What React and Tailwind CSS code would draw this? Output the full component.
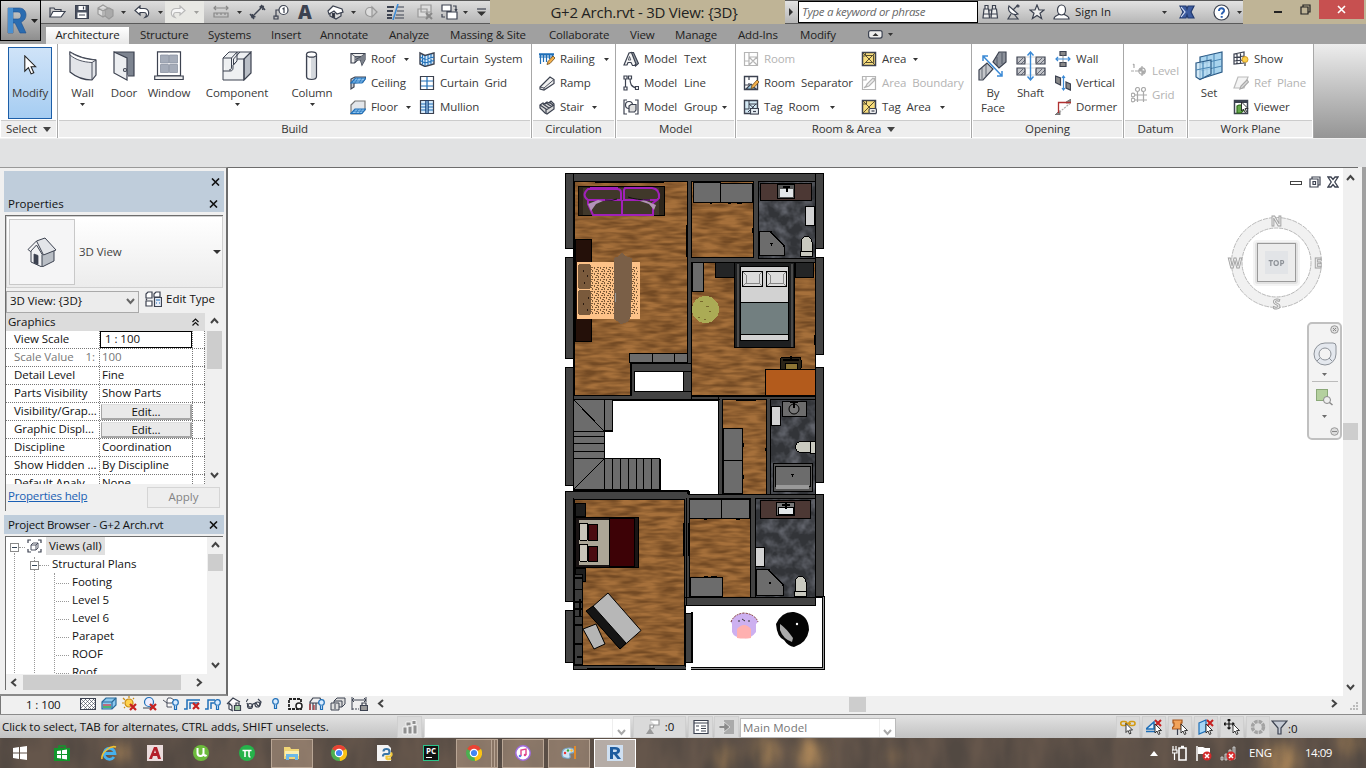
import React from "react";

const D = "#3c4250";
const B = "#1f6fb8";

function Svg({ w = 16, h = 16, vb, className = "", children }) {
  return (
    <svg width={w} height={h} viewBox={vb || `0 0 ${w} ${h}`} fill="none" stroke={D} strokeWidth="1.2" className={"shrink-0 " + className}>
      {children}
    </svg>
  );
}

const Caret = ({ className = "" }) => (
  <svg width="5" height="3" viewBox="0 0 5 3" className={"shrink-0 " + className}><path d="M0 0h5L2.5 3z" fill="#333" /></svg>
);
const Pencil = () => <path d="M8 13.5l1-3 5-5.500 2 2-5 5.500z" fill="#f5b04a" stroke="#6b4a1a" strokeWidth="0.8" />;
const RedX = ({ x = 8, y = 8 }) => <path d={`M${x} ${y}l6 6m0-6l-6 6`} stroke="#c62020" strokeWidth="2.2" />;
const Cursor = ({ x = 8, y = 5 }) => <path transform={`translate(${x} ${y})`} d="M0 0v9l2-2 1.500 3.500 1.500-.7L3.600 6.500H6.500z" fill="#fff" stroke="#222" strokeWidth="0.9" />;
const Bulb = () => (<><circle cx="12.500" cy="6.500" r="2.800" fill="#d9ecff" stroke={B} /><path d="M11.500 9.500v4h2v-4" fill="#d9ecff" stroke={B} /></>);

/* ---------- ribbon icons ---------- */
const I = {
  roof: <Svg><path d="M1 2.500h14v6l-3 5.500-1.500-5h-3l-3 3H1z" fill="#eee" /><path d="M4.500 5.500h7l3.500-3v6l-3 5.500-1.500-5h-4z" fill="#7b818b" stroke="none" /><path d="M1 2.500l4 3h6l4-3M5 5.500V12M5 9l6-3.500" strokeWidth="0.8" /></Svg>,
  ceiling: <Svg><path d="M1 4v10l3-2V8l9-1 3-5H5z" fill="#c9ced6" /><path d="M1 8l4.500-5H16l-4 5z" fill="#8cc4f0" stroke={B} /><path d="M3.500 6h10M8 3l-3 5M12 3L9 8" stroke={B} strokeWidth="0.7" /></Svg>,
  floor: <Svg><path d="M1 6l4-4h10v9l-4 4H1z" fill="#e3e6ea" stroke="#777" /><path d="M1 14.500L5 10h10.500L12 14.500z" fill="#8cc4f0" stroke={B} /><path d="M3.500 12.200h10M8.500 10l-3 4.500M12 10l-3 4.500" stroke={B} strokeWidth="0.7" /></Svg>,
  csys: <Svg><path d="M1 2l5 2.500L15 2v11l-9 2.500L1 13z" fill="#d7ebfb" stroke={D} strokeWidth="1.400" /><path d="M6 5v10M9 4v10M12 3v10M1 6l5 2.500L15 6M1 9.500L6 12l9-2.500M3.500 4v9.500" stroke={B} strokeWidth="1.100" /></Svg>,
  cgrid: <Svg><path d="M1.500 1.500h13v13h-13z" fill="#fff" /><path d="M8 2v12M2 6h12M2 11h12" stroke={B} /></Svg>,
  mull: <Svg><path d="M1.500 1.500h13v13h-13z" fill="#d7ebfb" /><path d="M2 5h5M9 5h5M2 8h5M9 8h5M2 11h5M9 11h5" stroke={B} /><path d="M8 1.500v13" stroke="#173f77" strokeWidth="3.500" /><path d="M8 2v12" stroke="#9ed0f5" /></Svg>,
  rail: <Svg><path d="M0 3h15M0 6h13M1.500 3v10M4.500 3v8M7.500 3v8M10.500 3v5M13.500 3v3" stroke={B} /><path d="M0 2.500h15v2H0z" fill={B} stroke="none" /><Pencil /></Svg>,
  ramp: <Svg><path d="M1 12L11 2l4 2.500v4L5 15l-4-1z" fill="#f0f0f0" /><path d="M1 12l4 1 10-8.500M5 13v2" strokeWidth="0.9" /></Svg>,
  stair: <Svg><path d="M1 6l3-2 2 1 2-2 2 1 2-2 3 3v5l-7 5-2-1-5-5z" fill="#d8d8d8" /><path d="M1 6l6 4v2M4 5l6 4M6.500 3.500l6 4M10 3l4.500 3.500M7 14v-3l8-5" /></Svg>,
  mtext: <Svg><path d="M8 1.500h2.500l5 11L12.500 15 7 3z" fill="#9aa0a8" /><path d="M1 14L6 2l2.500-.5L13 13l-1.500 1.500h-2L8 11.500H5L4 14z" fill="#f4f4f4" /><path d="M6.500 5.500L5.300 9h2.500z" fill="#fff" strokeWidth="0.8" /></Svg>,
  mline: <Svg><path d="M2.500 2v12M7 3c0 6 1 9 7 10" /><path d="M1 1h3v3H1zM1 12h3v3H1zM5.500 1h3v3h-3zM12.500 11.500h3v3h-3z" fill="#fff" /></Svg>,
  mgroup: <Svg><path d="M4 1H1v14h3M12 1h3v14h-3" /><circle cx="6" cy="6" r="3.500" fill="#fff" /><path d="M6 7l2-1.500h5V11l-1.500 2H6z" fill="#ddd" /></Svg>,
  roomg: <Svg><path d="M1.500 1.500h13v13h-13zM6 2v4M2 10h4M6 6h8M6 6v8M6 6l8 8M14 6l-8 8" stroke="#b5b5b5" /></Svg>,
  rsep: <Svg><path d="M1.500 1.500h13v13h-13z" fill="#fff" strokeWidth="1.400" /><path d="M6 2v3M6 8v2H2" /><path d="M3 14l5-5 5 5z" fill="#9fd0ea" /><Pencil /></Svg>,
  troom: <Svg><path d="M1.500 1.500h13v13h-13z" fill="#d4e9f4" strokeWidth="1.400" /><path d="M6 2v3M2 10h4V5h8M6 5l7 6M13 5l-8 8" strokeWidth="1" /><path d="M7.500 9.500h8v5.500h-8z" fill="#e8f0f5" /><path d="M10 12.500h3" /></Svg>,
  area: <Svg><path d="M1.500 1.500h13v13h-13z" fill="#f7dd7c" strokeWidth="1.500" /><path d="M1.500 5h3V1.500M2 2l12 12M14 2L2 14M4 4.500h8.500v7H4" stroke="#5a5030" strokeWidth="1" /></Svg>,
  areag: <Svg><path d="M1.500 1.500h13v13h-13zM2 5h3V2M3 13L14 3" stroke="#b5b5b5" /><path d="M5 12l1-3 6-6 2 2-6 6z" stroke="#b5b5b5" fill="#eee" /></Svg>,
  tarea: <Svg><path d="M1.500 1.500h13v13h-13z" fill="#f7dd7c" strokeWidth="1.500" /><path d="M2 2l12 12M14 2L2 14M1.500 5h4V1.500" stroke="#5a5030" strokeWidth="1" /><rect x="8" y="9.500" width="7.500" height="5" rx="1.500" fill="#eee" /><path d="M10.500 12h3" /></Svg>,
  owall: <Svg><path d="M5 .5h6v4H5zM5 11.500h6v4H5z" fill="#888" /><path d="M8 4v8" stroke="#777" strokeWidth="0.8" /><path d="M1 8h14M3 6L1 8l2 2M13 6l2 2-2 2" stroke="#3b8ad6" /></Svg>,
  overt: <Svg><path d="M.5 1l5 2v7l-5-2.500zM11 7l4.500 2v6L11 13z" fill="#888" /><path d="M8.500 1v14M7 3l1.500-2L10 3M7 13l1.500 2 1.500-2" stroke="#3b8ad6" /></Svg>,
  odorm: <Svg><path d="M11 3l5-3v4h-5zM0 16l4-4h1v4z" fill="#888" stroke="#666" strokeWidth="0.8" /><path d="M3.500 14V3.500H16" stroke="#b03030" strokeWidth="1.300" /><path d="M4.500 13L15 4.500" stroke="#aaa" strokeDasharray="2 1" /></Svg>,
  level: <Svg><path d="M0 8h8" stroke="#aaa" strokeDasharray="3 1" /><path d="M3 1v4M2 2l1-1" stroke="#aaa" /><circle cx="11" cy="8" r="3.200" stroke="#aaa" /><path d="M11 3v10M7 8h8" stroke="#aaa" /><path d="M11 8V5a3 3 0 00-3 3zM11 8v3a3 3 0 003-3z" fill="#aaa" stroke="none" /></Svg>,
  grid: <Svg><path d="M6.500 5v10M12.500 5v10M4 8h12M4 13h12" stroke="#aaa" /><circle cx="6.500" cy="2.500" r="2" stroke="#aaa" /><circle cx="12.500" cy="2.500" r="2" stroke="#aaa" /><circle cx="2" cy="8" r="1.800" stroke="#aaa" /><circle cx="2" cy="13" r="1.800" stroke="#aaa" /></Svg>,
  show: <Svg><path d="M1 3l10-2v11L1 13zM1 6.500l10-1.500M1 10l10-1M4 2.500v10.500M7.500 1.700v11" fill="none" /><circle cx="12" cy="8.500" r="3" fill="#fbd04a" stroke="#c98a10" strokeWidth="0.8" /><path d="M11 11.500h2v3.500h-2z" fill="#888" stroke="none" /></Svg>,
  refp: <Svg><path d="M1 13L5 2h10l-4 11z" fill="#f4f4f4" stroke="#bbb" /><path d="M7 14l1-3 6-6 1.500 2-6 6z" fill="#ddd" stroke="#aaa" /></Svg>,
  viewer: <Svg><path d="M1.500 1.500h13v13h-13z" fill="#fff" strokeWidth="1.500" /><path d="M2 3h12" strokeWidth="2" /><path d="M4 7l2-1h4l1 5-3 3H4z" fill="#64a84a" stroke="#2f6a1c" /><Cursor x={8.500} y={3} /></Svg>,
};

const Big = {
  modify: <Svg w={14} h={22}><path d="M2 1v17l4-4 3 7 3-1.300L9 13h5z" transform="scale(.9)" fill="#fff" stroke="#222" /></Svg>,
  wall: <Svg w={28} h={30}><path d="M1 1c8 5 16 7 26 8v15l-4 5C14 29 7 26 1 21z" fill="#e3e5e9" /><path d="M1 1c6 4.500 16 7.500 26 8l-4 2.500C14 11 7 9 1 4z" fill="#fff" strokeWidth="0.9" /><path d="M23 11.500V29" strokeWidth="0.9" /></Svg>,
  door: <Svg w={22} h={30}><path d="M1 1h20v24h-6" fill="#7d8490" /><path d="M1 1l13 6v22L1 22z" fill="#eceef1" /><circle cx="12" cy="19" r="1.500" fill="#fff" /></Svg>,
  window: <Svg w={30} h={30}><path d="M3.500.8h23v24h-23z" fill="#fff" /><path d="M6.500 4h8v8h-8zM15.500 4h8v8h-8zM6.500 13.500h8v8h-8zM15.500 13.500h8v8h-8z" fill="#a5acb9" stroke="#8b93a2" strokeWidth="0.8" /><path d="M.7 25h28.500v3.500H.7z" fill="#eee" /></Svg>,
  comp: <Svg w={30} h={30}><path d="M1 7l6-6h22v21l-7 7H1V19.500h2z" fill="#eef0f2" stroke="none" /><path d="M22 8l7-7v21l-7 7z" fill="#b9bec6" /><path d="M1 7l6-6h8v9l-4 4v3c0 2-1 3-3 3H1zM15 1h14l-7 7h-7M15 10l-3.500 4V8L18 1M1 20v9h21V8M1 7h8.500v9c0 2-.5 3-2.500 3M9.500 7L15 1" strokeWidth="1" /></Svg>,
  column: <Svg w={14} h={30}><path d="M1.500 3.500v22c0 4 10 4 10 0v-22z" fill="#d4d8dd" /><path d="M4.500 5v22" stroke="#f8f8f8" strokeWidth="3" /><ellipse cx="6.500" cy="3.500" rx="5" ry="2.700" fill="#fff" /></Svg>,
  face: <Svg w={30} h={30}><path d="M1 29V19l8-7 6 6L5 29z" fill="#c4c6ca" /><path d="M28 1v10l-7 6-6-6 6-10z" fill="#8d929b" /><path d="M4 17v11M8 13v12M19 6v9M24 2v11" strokeWidth="0.7" /><path d="M5 5l19 20M5 10V5h5M24 20v5h-5" stroke="#3b8ad6" strokeWidth="1.500" /></Svg>,
  shaft: <Svg w={30} h={30}><path d="M1 6h8v7H1zM20 6h9v7h-9zM1 17h8v7H1zM20 17h9v7h-9z" fill="#c2c4c9" /><path d="M2 12l5-5M5 13l4-4M21 12l5-5M24 13l5-5M2 23l5-5M5 24l4-4M21 23l5-5M24 24l5-5" strokeWidth="0.7" /><path d="M9 6h11M9 13h11M9 17h11M9 24h11" stroke="#ccc" strokeWidth="0.8" /><path d="M14.500 1v28M11.500 4.500l3-3.500 3 3.500M11.500 25.500l3 3.500 3-3.500" stroke="#3b8ad6" strokeWidth="1.400" /></Svg>,
  set: <Svg w={28} h={30}><path d="M5 6l22-5v20L5 28z" fill="#a9d4ee" stroke="#2a5a86" /><path d="M5 13l22-5M5 20l22-5M12 4v22M19 3v20" stroke="#4a86b4" strokeWidth="1" /><path d="M1 12l15-3v14L5 28.500 1 26z" fill="#bfe0f4" fillOpacity=".7" stroke="#2a5a86" /><path d="M1 19l15-3M8 11v16" stroke="#4a86b4" /></Svg>,
};

function Tool({ icon, label, dim, arrow, className = "" }) {
  return (
    <div className={"flex h-6 items-center whitespace-nowrap " + className}>
      <span className="w-[21px] shrink-0">{icon}</span>
      <span className={dim ? "text-[#b3b3b3]" : ""}>{label}</span>
      {arrow && <Caret className={arrow} />}
    </div>
  );
}
const Col = ({ className = "", children }) => <div className={"flex shrink-0 flex-col pt-[3px] " + className}>{children}</div>;
function BigTool({ icon, label, arrow, className = "" }) {
  return (
    <div className={"flex shrink-0 flex-col items-center pt-[7px] " + className}>
      <div className="flex h-[30px] items-center">{icon}</div>
      <div className="mt-[4px] text-center leading-[15px]">{label}</div>
      {arrow && <Caret className="mt-[3px]" />}
    </div>
  );
}
function Panel({ title, className = "", caret, children }) {
  return (
    <div className={"flex h-[94px] shrink-0 flex-col border-r border-[#a8a8a8] " + className}>
      <div className="flex h-[76px] overflow-hidden">{children}</div>
      <div className="mx-[1px] flex h-[17px] items-center justify-center border-t border-[#ccc] bg-[#eee] text-[#333]">
        <span>{title}</span>
        {caret && <svg width="8" height="5" className="ml-[6px]"><path d="M0 0h8L4 5z" fill="#444" /></svg>}
      </div>
    </div>
  );
}

function QuickBar() {
  return (
    <div className="flex h-[24px] w-[449px] shrink-0 items-center border-y border-[#5a5a5a] bg-gradient-to-b from-[#dedede] to-[#b6b6b6]">
      <Svg w={17} h={14} className="ml-[8px]"><path d="M1 12V3h4l1 1.500h6V7" /><path d="M1 12l3-5.500h12L12 12z" fill="#fff" /></Svg>
      <Svg w={14} h={14} vb="1 1 14 14" className="ml-[9px]"><path d="M1.500 1.500h13v13h-13z" fill="#4b5260" /><path d="M4.500 2h7v4h-7zM3.500 8.500h9V14h-9z" fill="#fff" stroke="none" /><path d="M9.500 2.500v3M5 11h6" /></Svg>
      <Svg w={17} h={16} className="ml-[8px]"><path d="M1 4l5-3 5 3v6l-5 3-5-3zM1 4l5 3 5-3M6 7v6" stroke="#999" fill="#ddd" /><path d="M8 6l4-2 4 2v6l-4 3-4-3z" fill="#aaa" stroke="#999" /></Svg>
      <Caret className="ml-[7px]" />
      <Svg w={16} h={14} className="ml-[8px]"><path d="M6 1L1 5.500 6 10V7.500h4c3 0 3 3 1 5 5-1 5-9-1-9H6z" fill="#fff" /></Svg>
      <Caret className="ml-[8px]" />
      <div className="ml-[2px] flex h-full w-[39px] items-center bg-[#e8e8e4]">
        <Svg w={16} h={14} className="ml-[5px]"><path d="M10 1l5 4.500L10 10V7.500H6c-3 0-3 3-1 5-5-1-5-9 1-9h4z" stroke="#b9b9b9" fill="#f6f6f6" /></Svg>
        <Caret className="ml-[8px] opacity-40" />
      </div>
      <Svg w={16} h={14} className="ml-[9px]"><path d="M1 3h14M3 1L1 3l2 2M13 1l2 2-2 2M1 8h14v4H1zM4 8v2M8 8v2M12 8v2" stroke="#888" /></Svg>
      <Caret className="ml-[8px]" />
      <Svg w={17} h={16} className="ml-[7px]"><path d="M3 13L14 2M1 10l4 5M12 1l4 5M2.500 13.500l1-3.500M2.500 13.500l4-1M14.500 2l-4 1M14.500 2l-1 4" strokeWidth="1.400" /></Svg>
      <Svg w={17} h={16} className="ml-[7px]"><circle cx="10.500" cy="6" r="4.500" fill="#fff" /><path d="M6 6H3v7M1 12h4v3H1zM9.500 5l1.500-1v5" fill="none" /></Svg>
      <span className="ml-[8px] w-[14px] text-[19px] leading-none font-black text-[#3c4250]">A</span>
      <Svg w={17} h={16} className="ml-[15px]"><path d="M3 7v5l6 3 5-3V7" fill="#ddd" /><path d="M1 7l5-5 9 3 1 3-6 2-3-3-5 3z" fill="#fff" /><path d="M5.500 9.500h2v4h-2z" fill="#333" /></Svg>
      <Caret className="ml-[7px]" />
      <Svg w={14} h={14} className="ml-[8px]"><circle cx="6" cy="7" r="4.500" stroke="#999" fill="#ddd" /><path d="M8 2l5 5-5 5z" fill="#ccc" stroke="#999" /></Svg>
      <Svg w={17} h={16} className="ml-[9px]"><path d="M0 3h7M0 7h6M0 11h5M0 14h5" strokeWidth="2" /><path d="M10 3h7M10 7h7M9 11h8M8 14h9" /><path d="M11 0L6 16" stroke="#3b8ad6" strokeWidth="1.500" /></Svg>
      <Svg w={16} h={16} className="ml-[13px]"><path d="M4 1h10v7H4zM1 5h9v8H1z" stroke="#999" fill="#ddd" /><path d="M9 9l6 6M15 9l-6 6" stroke="#888" strokeWidth="2" /></Svg>
      <Svg w={17} h={16} className="ml-[8px]"><path d="M1 1h9v6H1zM6 8h10v7H6z" fill="#fff" /><path d="M12 2h3v4M14 5l1 2 1-2M1 10v3h3" /></Svg>
      <Caret className="ml-[5px]" />
      <Svg w={9} h={8} className="ml-[9px]"><path d="M0 1h9" /><path d="M0 3.500h9L4.500 8z" fill="#333" stroke="none" /></Svg>
    </div>
  );
}

function SearchBar() {
  return (
    <div className="flex h-[24px] w-[458px] shrink-0 items-center border-y border-[#5a5a5a] bg-gradient-to-b from-[#e2e2e2] to-[#b6b6b6]">
      <svg width="4" height="8" className="ml-[4px]"><path d="M0 0l4 4-4 4z" fill="#333" /></svg>
      <div className="ml-[5px] flex h-[22px] w-[180px] items-center border border-black bg-white pl-[3px] text-[11.500px] text-[#666] italic"><span className="tracking-[-0.3px]">Type a keyword or phrase</span></div>
      <Svg w={17} h={16} className="ml-[4px]"><path d="M3 1.500h3V5H3zM10.500 1.500h3V5h-3zM2 5h4.500l1 9H1zM10 5h4.500l1 9H9zM7 6h2.500v4H7z" fill="#eee" /><path d="M1.500 10H7M9.500 10h5.500" /></Svg>
      <Svg w={15} h={16} className="ml-[7px]"><path d="M3 2c-2 5 3 10 9 8z" fill="#fff" /><path d="M7 6l5-5M5 10l-3 5h10l-4-5" fill="none" /><circle cx="12" cy="2" r="1" /></Svg>
      <Svg w={16} h={16} className="ml-[8px]"><path d="M8 1l2 5h5l-4 3.300 1.600 5.200L8 11.500l-4.600 3L5 9.300 1 6h5z" fill="#eee" /></Svg>
      <Svg w={17} h={16} className="ml-[8px]"><path d="M1 15c0-4 4-3 5-5h5c1 2 5 1 5 5z" fill="#fff" /><ellipse cx="8.500" cy="6" rx="4" ry="5" fill="#fff" /></Svg>
      <span className="ml-[5px] w-[87px] tracking-[0.05px] text-[#222]">Sign In</span>
      <Caret />
      <Svg w={16} h={14} className="ml-[12px]"><path d="M1 1h6l1 3 1-3h6l-3 6 3 6H9l-1-3-1 3H1l3-6z" fill="#3d5ca0" stroke="#223a70" /><path d="M2 2l4 5-4 5" stroke="#d8e2f6" /></Svg>
      <Svg w={17} h={17} className="ml-[18px]"><circle cx="8.500" cy="8.500" r="7.500" fill="#fff" /><path d="M6 7c0-4 5.500-3.500 5 0-.3 1.500-2.300 1.500-2.300 3.500M8.700 12v1.800" stroke="#2a5fb0" strokeWidth="2" /></Svg>
      <Caret className="ml-[7px]" />
    </div>
  );
}

function Header() {
  return (
    <div className="flex h-[44px] bg-[#a0a0a0]">
      <div className="flex h-[41px] w-[41px] shrink-0 items-center border border-black bg-gradient-to-b from-[#d6d6d6] to-[#8e8e8e]">
        <Svg w={22} h={28} className="ml-[6px]"><path d="M1 1h11c9 0 9 12 2 14l5 11h-6L8 16H6v10H1zM6 5v7h5c4 0 4-7 0-7z" fill="#2b6cb0" stroke="#1d4f8f" strokeWidth="0.6" fillRule="evenodd" /><path d="M1 1h5v25H1z" fill="#4b90d0" stroke="none" /></Svg>
        <svg width="7" height="4" className="ml-[2px]"><path d="M0 0h7L3.500 4z" fill="#222" /></svg>
      </div>
      <div className="min-w-0 flex-1">
        <div className="flex h-[24px] bg-[#bfb496]">
          <QuickBar />
          <div className="flex w-[295px] items-center justify-center pl-[13px] text-[15px] tracking-[-0.25px] text-[#222]">G+2 Arch.rvt - 3D View: {"{3D}"}</div>
          <SearchBar />
          <div className="flex flex-1 items-start">
            <div className="mt-[11px] ml-[31px] h-[2px] w-[8px] bg-[#222]" />
            <Svg w={11} h={11} className="mt-[4px] ml-[18px]"><path d="M1 3h7v7H1zM3 3V1h7v7H8" stroke="#222" /></Svg>
            <div className="ml-[8px] flex h-[19px] w-[45px] items-center justify-center bg-[#c75050]">
              <svg width="9" height="9"><path d="M1 1l7 7M8 1l-7 7" stroke="#fff" strokeWidth="1.600" /></svg>
            </div>
          </div>
        </div>
        <div className="flex h-[20px] items-center text-[#222]">
          <span className="ml-[5px] flex h-[17px] w-[83px] items-center justify-center self-end bg-gradient-to-b from-[#fff] to-[#e8e8e8] pb-[1px] tracking-[-0.15px]">Architecture</span>
          <div className="flex items-center pt-[1px] tracking-[-0.15px]">
            <span className="w-[68px] pl-[11px]">Structure</span><span className="w-[63px] pl-[11px]">Systems</span>
            <span className="w-[49px] pl-[11px]">Insert</span><span className="w-[69px] pl-[11px]">Annotate</span>
            <span className="w-[61px] pl-[11px]">Analyze</span><span className="w-[99px] pl-[11px] whitespace-nowrap">Massing &amp; Site</span>
            <span className="w-[81px] pl-[11px]">Collaborate</span><span className="w-[45px] pl-[11px]">View</span>
            <span className="w-[63px] pl-[11px]">Manage</span><span className="w-[62px] pl-[11px]">Add-Ins</span>
            <span className="w-[79px] pl-[11px]">Modify</span>
            <Svg w={15} h={9}><rect x=".6" y=".6" width="13.500" height="7.500" rx="2" fill="#eee" /><path d="M4.500 6l3-3 3 3z" fill="#333" stroke="none" /></Svg>
            <Caret className="ml-[5px]" />
          </div>
        </div>
      </div>
    </div>
  );
}

function Ribbon() {
  return (
    <div className="flex h-[95px] border-b border-[#efefef] bg-white tracking-[-0.12px] text-[#3a3a3a]">
      <Panel title="Select" caret className="w-[58px]">
        <div className="mt-[3px] ml-[8px] flex h-[72px] w-[44px] shrink-0 flex-col items-center border border-[#1c5ea8] bg-gradient-to-b from-[#cfe3f8] to-[#a6cdf2] pt-[7px]">
          {Big.modify}<span className="mt-[8px]">Modify</span>
        </div>
      </Panel>
      <Panel title="Build" className="w-[474px]">
        <BigTool icon={Big.wall} label="Wall" arrow className="w-[49px]" />
        <BigTool icon={Big.door} label="Door" className="w-[34px]" />
        <BigTool icon={Big.window} label="Window" className="w-[56px]" />
        <BigTool icon={Big.comp} label="Component" arrow className="w-[80px]" />
        <BigTool icon={Big.column} label="Column" arrow className="w-[70px] " />
        <Col className="w-[73px] pl-[3px]">
          <Tool icon={I.roof} label="Roof" arrow="ml-[9px]" /><Tool icon={I.ceiling} label="Ceiling" /><Tool icon={I.floor} label="Floor" arrow="ml-[8px]" />
        </Col>
        <Col className="-ml-[1px] [word-spacing:3px]">
          <Tool icon={I.csys} label="Curtain System" /><Tool icon={I.cgrid} label="Curtain Grid" /><Tool icon={I.mull} label="Mullion" />
        </Col>
      </Panel>
      <Panel title="Circulation" className="w-[84px]">
        <Col className="pl-[7px]">
          <Tool icon={I.rail} label="Railing" arrow="ml-[9px]" /><Tool icon={I.ramp} label="Ramp" /><Tool icon={I.stair} label="Stair" arrow="ml-[8px]" />
        </Col>
      </Panel>
      <Panel title="Model" className="w-[120px]">
        <Col className="pl-[7px] [word-spacing:4px]">
          <Tool icon={I.mtext} label="Model Text" /><Tool icon={I.mline} label="Model Line" /><Tool icon={I.mgroup} label="Model Group" arrow="ml-[5px]" />
        </Col>
      </Panel>
      <Panel title="Room & Area" caret className="w-[236px]">
        <Col className="w-[126px] pl-[7px] [word-spacing:3px]">
          <Tool icon={I.roomg} label="Room" dim /><Tool icon={I.rsep} label="Room Separator" /><Tool icon={I.troom} label="Tag Room" arrow="ml-[10px]" />
        </Col>
        <Col className="-ml-[1px] [word-spacing:3px]">
          <Tool icon={I.area} label="Area" arrow="ml-[7px]" /><Tool icon={I.areag} label="Area Boundary" dim /><Tool icon={I.tarea} label="Tag Area" arrow="ml-[9px]" />
        </Col>
      </Panel>
      <Panel title="Opening" className="w-[152px]">
        <BigTool icon={Big.face} label={<>By<br />Face</>} className="w-[42px]" />
        <BigTool icon={Big.shaft} label="Shaft" className="w-[33px]" />
        <Col className="pl-[8px]">
          <Tool icon={I.owall} label="Wall" /><Tool icon={I.overt} label="Vertical" /><Tool icon={I.odorm} label="Dormer" />
        </Col>
      </Panel>
      <Panel title="Datum" className="w-[64px]">
        <Col className="pt-[15px] pl-[7px]"><Tool icon={I.level} label="Level" dim /><Tool icon={I.grid} label="Grid" dim /></Col>
      </Panel>
      <Panel title="Work Plane" className="w-[126px]">
        <BigTool icon={Big.set} label="Set" className="w-[42px]" />
        <Col className="pl-[3px] [word-spacing:3px]"><Tool icon={I.show} label="Show" /><Tool icon={I.refp} label="Ref Plane" dim /><Tool icon={I.viewer} label="Viewer" /></Col>
      </Panel>
      <div className="flex-1 bg-gradient-to-b from-[#ededed] to-[#959595]" />
    </div>
  );
}

const Close = ({ className = "" }) => <svg width="9" height="8" viewBox="0 0 9 8" className={"shrink-0 " + className}><path d="M1 .5l7 7M8 .5l-7 7" stroke="#111" strokeWidth="1.600" /></svg>;
const Chev = ({ d = "v", className = "", c = "#444" }) => {
  const p = { v: "M1 2l3.500 4L8 2", "^": "M1 6l3.500-4L8 6", "<": "M6 1L2 4.500 6 8", ">": "M2 1l4 3.500L2 8" }[d];
  return <svg width="9" height="9" className={"shrink-0 " + className}><path d={p} fill="none" stroke={c} strokeWidth="2" /></svg>;
};

const rows = [
  ["View Scale", "1 : 100", "box"], ["Scale Value    1:", "100", "dim"], ["Detail Level", "Fine"], ["Parts Visibility", "Show Parts"],
  ["Visibility/Grap...", "Edit...", "btn"], ["Graphic Displ...", "Edit...", "btn"], ["Discipline", "Coordination"],
  ["Show Hidden ...", "By Discipline"], ["Default Analy...", "None"],
];

function Properties() {
  return (
    <>
      <div className="mr-[2px] ml-[4px] flex h-[41px] shrink-0 flex-col bg-[#bfcddb]">
        <div className="flex h-[22px] items-center justify-end pr-[4px]"><Close /></div>
        <div className="flex flex-1 items-center justify-between pt-[2px] pr-[6px] pl-[4px]"><span>Properties</span><Close /></div>
      </div>
      <div className="mt-[3px] mr-[3px] ml-[5px] flex h-[296px] shrink-0 flex-col border-t border-l border-[#6d6d6d] bg-[#f0f0f0]">
        <div className="flex h-[72px] items-center border border-[#d0d0d0] bg-gradient-to-b from-white to-[#ececec] pl-[2px]">
          <div className="flex h-[66px] w-[66px] items-center justify-center border border-[#c8c8c8] bg-[#f5f5f6]">
            <Svg w={30} h={30} vb="0 0 30 30"><path d="M4 14v11l11 5 12-6V11L18 2 10 5z" fill="#f0f1f3" stroke="none" /><path d="M15 18v12l12-6V12z" fill="#b9bec5" stroke="none" /><path d="M4 14v11l11 5 12-6V12M15 18v12" strokeWidth="1" /><path d="M9.500 4L18 1l11 12-12.500 5z" fill="#e3e5e9" strokeWidth="1" /><path d="M9.500 4L1 12.500l2.500 2L9.500 8l6 10" strokeWidth="1" /><path d="M7 17l4 1.500v9L7 26z" fill="#3c4250" strokeWidth="0.8" /></Svg>
          </div>
          <span className="ml-[4px] flex-1 tracking-[-0.05px] text-[#444]">3D View</span>
          <svg width="8" height="4" className="mr-[1px]"><path d="M0 0h8L4 4z" fill="#333" /></svg>
        </div>
        <div className="flex h-[25px] items-center">
          <div className="mt-[2px] flex h-[22px] w-[133px] items-center justify-between border border-[#a9a9a9] bg-[#ececec] pr-[3px] pb-[1px] pl-[3px]"><span className="tracking-[-0.05px]">3D View: {"{3D}"}</span><Chev c="#666" /></div>
          <Svg w={17} h={16} className="-mt-[3px] ml-[6px]"><path d="M1 3l2-2h4v6H1zM9 3l2-2h4v5H9zM1 10h6v5H1zM1 9l1-1" fill="#fff" /><path d="M9.500 6.500h7v9h-7z" fill="#e8eef8" /><path d="M11 9h4M11 12h1M14 12h1" stroke={B} /></Svg>
          <span className="-mt-[3px] ml-[4px]">Edit Type</span>
        </div>
        <div className="flex h-[171px]">
          <div className="w-[199px] overflow-hidden bg-white">
            <div className="flex h-[18px] items-center justify-between bg-[#dcdcdc] pr-[6px] pl-[2px]"><span>Graphics</span>
              <svg width="7" height="8"><path d="M.5 4l3-3 3 3M.5 7.500l3-3 3 3" fill="none" stroke="#111" strokeWidth="1.200" /></svg></div>
            {rows.map(([a, b, t]) => (
              <div key={a} className={"flex h-[18px] border-b border-dotted border-[#777] leading-[16px] tracking-[-0.05px] whitespace-pre " + (t === "dim" ? "text-[#777]" : "")}>
                <span className="w-[94px] border-r border-dotted border-[#777] pl-[8px]">{a}</span>
                <span className="flex w-[93px] border-r border-dotted border-[#777]">
                  {t === "box" ? <span className="h-[17px] w-[92px] border border-black pl-[4px] leading-[14px]">{b}</span>
                    : t === "btn" ? <span className="mt-[1px] ml-[1px] h-[16px] w-[91px] border border-t-[#ddd] border-r-2 border-b-2 border-[#a5a5a5] bg-[#e9e9e9] text-center leading-[14px]">{b}</span>
                    : <span className="pl-[2px]">{b}</span>}
                </span>
                <span className="w-[12px] border-r border-dotted border-[#777]" />
              </div>
            ))}
          </div>
          <div className="flex flex-1 flex-col items-center bg-[#f0f0f0] pt-[4px] pb-[4px]">
            <Chev d="^" /><div className="mt-[5px] h-[38px] w-[15px] bg-[#cdcdcd]" /><Chev className="mt-auto" />
          </div>
        </div>
        <div className="flex h-[26px] items-center justify-between pr-[3px] pl-[2px]">
          <span className="pb-[2px] tracking-[-0.18px] text-[#1a5fb4] underline">Properties help</span>
          <span className="flex h-[21px] w-[73px] items-center justify-center border border-[#d5d5d5] bg-[#eee] text-[#838383]">Apply</span>
        </div>
      </div>
    </>
  );
}

const MinusBox = () => <svg width="9" height="9" className="mt-[2px] shrink-0"><rect x=".5" y=".5" width="8" height="8" fill="#fff" stroke="#8a8a8a" /><path d="M2 4.500h5" stroke="#345" /></svg>;
const Dots = ({ className }) => <span className={"mt-[2px] shrink-0 border-b border-dotted border-[#999] " + className} />;

function Browser() {
  return (
    <>
      <div className="mt-[4px] mr-[2px] ml-[4px] flex h-[19px] shrink-0 items-center justify-between bg-[#bfcddb] pr-[6px] pl-[4px]"><span className="tracking-[-0.2px]">Project Browser - G+2 Arch.rvt</span><Close /></div>
      <div className="mt-[2px] mr-[3px] ml-[5px] h-[154px] shrink-0 border-t border-l border-[#6d6d6d] bg-white">
        <div className="flex h-[137px]">
          <div className="relative w-[201px] overflow-hidden">
            <div className="absolute top-[16px] left-[8px] h-[130px] border-l border-dotted border-[#999]" />
            <div className="absolute top-[20px] left-[28px] h-[130px] border-l border-dotted border-[#999]" />
            <div className="absolute top-[36px] left-[48px] h-[110px] border-l border-dotted border-[#999]" />
            <div className="flex h-[18px] items-center pl-[4px]"><MinusBox /><Dots className="w-[6px]" />
              <Svg w={15} h={14} className="ml-[2px]"><path d="M4 1H1v3M11 1h3v3M1 10v3h3M14 10v3h-3" /><path d="M4 6l2-2h5v5l-2 2H4zM4 6h5v5M9 6l2-2" strokeWidth="0.9" /></Svg>
              <span className="ml-[4px] h-[18px] w-[59px] bg-[#e0e0e0] pl-[3px] leading-[18px] whitespace-nowrap">Views (all)</span></div>
            <div className="relative flex h-[18px] items-center pl-[24px]"><MinusBox /><Dots className="w-[10px]" /><span className="ml-[3px]">Structural Plans</span></div>
            {["Footing", "Level 5", "Level 6", "Parapet", "ROOF", "Roof"].map((s) => (
              <div key={s} className="flex h-[18px] items-center pl-[50px]"><Dots className="w-[13px]" /><span className="ml-[3px]">{s}</span></div>
            ))}
          </div>
          <div className="flex flex-1 flex-col items-center bg-[#f0f0f0] py-[4px]"><Chev d="^" /><div className="mt-[4px] h-[17px] w-[15px] bg-[#cdcdcd]" /><Chev className="mt-auto" /></div>
        </div>
        <div className="flex h-[16px] items-center bg-[#f0f0f0] pl-[4px]"><Chev d="<" /><div className="ml-[4px] h-[15px] w-[158px] bg-[#cdcdcd]" /><Chev d=">" className="ml-[14px]" /></div>
      </div>
    </>
  );
}

/* ---------- floor plan ---------- */
const R = ({ x, y, x2, y2, f, s = "#000", sw = 1, ...o }) => <rect x={x} y={y} width={x2 - x} height={y2 - y} fill={f} stroke={s} strokeWidth={sw} {...o} />;
const G = "#6c6c6c";
const W = "#434343";
const Wood = (p) => <g><R {...p} f="#734a24" s="none" /><R {...p} f="#000" s="none" filter="url(#wood)" /><R {...p} f="none" /></g>;
const Stone = (p) => <g><R {...p} f="#323438" s="none" /><R {...p} f="#000" s="none" filter="url(#stone)" /><R {...p} f="none" /></g>;
const Lace = () => (
  <pattern id="lace" width="6" height="6" patternUnits="userSpaceOnUse"><rect width="6" height="6" fill="#fdc288" /><path d="M1 1h2v1H1zM4 0h1v2H4zM0 3h1v2H0zM3 3h2v1H3zM2 5h2v1H2z" fill="#7d5a37" /></pattern>
);
const Toilet = ({ t }) => <g transform={t}><path d="M-5.500 14V5a5.500 5.500 0 0111 0v9z" fill="#c9c9bf" stroke="#000" /><path d="M-6 14H6v5H-6z" fill="#c9c9bf" stroke="#000" /></g>;

function Plan() {
  return (
    <svg width="270" height="510" viewBox="560 168 270 510" shapeRendering="crispEdges" className="ml-[332px]">
      <defs>
        <filter id="wood" x="0" y="0" width="1" height="1" colorInterpolationFilters="sRGB"><feTurbulence type="fractalNoise" baseFrequency="0.05 0.24" numOctaves="2" seed="4" /><feColorMatrix values="0 0 0 0 .65  0 0 0 0 .44  0 0 0 0 .23  2.2 0 0 0 -.55" /></filter>
        <filter id="stone" x="0" y="0" width="1" height="1" colorInterpolationFilters="sRGB"><feTurbulence type="fractalNoise" baseFrequency="0.09 0.09" numOctaves="3" seed="7" /><feColorMatrix values="0 0 0 0 .38  0 0 0 0 .39  0 0 0 0 .42  2.2 0 0 0 -.8" /></filter>
        <Lace />
      </defs>
      {/* outer walls */}
      <R x={565.5} y={173.5} x2={573.5} y2={248.5} f={W} /><R x={565.5} y={257.5} x2={573.5} y2={358.5} f={W} />
      <R x={565.5} y={367.5} x2={573.5} y2={485.5} f={W} /><R x={565.5} y={491.5} x2={573.5} y2={601.5} f={W} /><R x={565.5} y={610.5} x2={573.5} y2={662.5} f={W} />
      <R x={815.5} y={173.5} x2={823.5} y2={248.5} f={W} /><R x={815.5} y={257.5} x2={823.5} y2={354.5} f={W} />
      <R x={815.5} y={367.5} x2={823.5} y2={482.5} f={W} /><R x={815.5} y={494.5} x2={823.5} y2={597.5} f={W} />
      <R x={573.5} y={173.5} x2={815.5} y2={400} f={W} />
      <R x={718.5} y={396} x2={815.5} y2={496} f={W} />
      <R x={573.5} y={491.5} x2={689} y2={669} f={W} /><R x={686} y={494.5} x2={815.5} y2={605.5} f={W} />
      <R x={566} y={492} x2={688} y2={498} f={W} s="none" />
      {/* rooms */}
      <Wood x={574.5} y={181.5} x2={687.5} y2={396} /><Wood x={691.5} y={181.5} x2={753.500} y2={257.500} /><Stone x={758.5} y={181.5} x2={815.5} y2={258.500} />
      <Wood x={691.5} y={262} x2={815.5} y2={396} />
      <Wood x={722.500} y={399.5} x2={766.500} y2={494} /><Stone x={770.500} y={399.5} x2={815.5} y2={494} />
      <Wood x={574} y={499.5} x2={684.500} y2={665.500} /><Wood x={689} y={498.500} x2={750.500} y2={597.500} /><Stone x={755} y={498.500} x2={815.5} y2={597.500} />
      <path d="M595 181.500h69M687 225v32M815 335v10M684 523v33M689 523v33M587 668.500h68" stroke="#000" strokeWidth="2" />
      {/* living room */}
      <R x={578.5} y={186.5} x2={664.500} y2={215.500} f="#2e261b" /><R x={583} y={188} x2={659} y2={215} f="#40382a" s="none" />
      <g shapeRendering="auto"><path d="M588 189h29q4 0 4 4v7h-33q-7-5 0-11zM625 188h27q8 1 7 10l-2 2h-33v-10zM588 200v4l5 11h29v-15M622 200v15h31v-12l4-3M590 188h28" fill="none" stroke="#a020b8" strokeWidth="2" />
      <path d="M588 204l10-4 5 1-7 3-5 7zM656 205l-12-5-4 1 9 3 5 6z" fill="#b394b7" />
      <path d="M628 197q8 3 22 3M605 200q8 1 12-1" stroke="#111" fill="none" /></g>
      <R x={575.5} y={239.500} x2={591.500} y2={341.500} f="#241009" />
      <R x={577} y={262} x2={640} y2={319} f="#fdc288" s="none" />
      <R x={591} y={267} x2={638} y2={315} f="url(#lace)" s="none" />
      <R x={578} y={264} x2={591} y2={289} f="#7a5a3c" s="none" rx="3" /><R x={578} y={290} x2={591} y2={315} f="#7a5a3c" s="none" rx="3" />
      <path d="M614 258l5-2 3-4 3 4 7 2v26l-1 32-3 6-7 2-4-3-3-2z" fill="#7a5f47" />
      <path d="M583 270v2M587 275v2M584 282v2M588 297v2M583 303v2M587 309v2" stroke="#2a1a10" strokeWidth="1" />
      <path d="M615.500 293v9" stroke="#999" />
      <R x={629.5} y={353.500} x2={687.500} y2={362.500} f={G} /><path d="M652.500 354v8M674.500 354v8" stroke="#000" />
      <R x={631} y={363.500} x2={691} y2={399} f={W} /><path d="M630.500 363v33M636 371.500h55M638 391.500h53" stroke="#000" /><R x={634.5} y={371.500} x2={683.500} y2={391.500} f="#fff" />
      {/* closet and bath, top */}
      <R x={693.5} y={182.500} x2={720.500} y2={202.500} f={G} /><R x={720.5} y={183.500} x2={752.500} y2={202.500} f={G} />
      <path d="M710 203.500h2M728 203.500h3M737 203.500h5M752.500 228v5" stroke="#000" strokeWidth="1.500" />
      <R x={760.5} y={183.500} x2={811.500} y2={200.500} f="#4c3834" /><R x={777.500} y={184.500} x2={794.500} y2={198.500} f="#555" /><R x={779.500} y={189} x2={792.500} y2={197} f="#e2e6e8" s="none" /><path d="M783 187h7M786.500 187v5" stroke="#000" strokeWidth="2" />
      <R x={805.5} y={206.500} x2={814.500} y2={225.500} f="#d3d3d3" />
      <path d="M759.500 255.500v-24h11l14 15v9z" fill={G} stroke="#000" strokeWidth="1.500" /><path d="M770 243h3l-1.500 2z" fill="none" stroke="#000" />
      <Toilet t="translate(806.500 237)" />
      {/* bedroom */}
      <R x={692.5} y={262.500} x2={703.500} y2={291.500} f={G} /><R x={715.5} y={262.500} x2={734.500} y2={277.500} f="#242526" /><R x={795.5} y={262.500} x2={813.500} y2={277.500} f="#242526" />
      <circle cx="705.500" cy="309.500" r="13.500" fill="#abab55" /><path d="M700 301h3M706 306h3M698 317h2M709 311h2M704 319h2" stroke="#77682c" />
      <R x={734.5} y={262.500} x2={794.500} y2={347.500} f="#1e1f20" /><path d="M737.500 264v83M791.500 264v83" stroke="#4a4a4a" strokeWidth="2" />
      <R x={740.500} y={266.500} x2={788.500} y2={340.500} f="#d2d2d2" /><R x={740.500} y={302.500} x2={788.500} y2={334.500} f="#727f80" />
      <R x={742.500} y={271.500} x2={762.500} y2={286.500} f="#dcdcdc" rx="1" /><R x={766.500} y={271.500} x2={786.500} y2={286.500} f="#dcdcdc" rx="1" />
      <path d="M743 272l3 3v8l-3 3M762 272l-3 3v8l3 3M746 283h13M767 272l3 3v8l-3 3M786 272l-3 3v8l3 3M770 283h13" stroke="#888" fill="none" />
      <R x={780.500} y={357.500} x2={801} y2={370} f="#2a2418" rx="2" /><R x={785} y={363} x2={797} y2={369} f="#8c7434" /><path d="M783 360h16M791 356v3" stroke="#000" strokeWidth="2" />
      <R x={765.5} y={369.500} x2={815} y2={395.500} f="#b35b1c" />
      {/* stairs and hall */}
      <path d="M574 395.500h57M691 395.500h124M574 399.500h146" stroke="#000" /><R x={574} y={396} x2={632} y2={399} f={W} s="none" />
      <path d="M573.500 399.500h39v31h-8v28h55v31h-86z" fill={G} stroke="#000" />
      <path d="M604.500 400v58.500h-31M573.500 431.500h39M573.500 436.500h31M573.500 443.500h31M573.500 451.500h31M604.500 458v32M612.500 458v32M620.500 458v32M628.500 458v32M636.500 458v32M643.500 458v32M651.500 458v32M574 400l30 31M604 459l-30 30" stroke="#000" fill="none" />
      <path d="M612.500 431v-31.500M613 399.500h105M718.500 400v93M660 459v31M573 490.500h115v3" stroke="#000" fill="none" strokeWidth="1.500" />
      <R x={723.5} y={428.500} x2={742.500} y2={460.500} f={G} /><R x={723.5} y={460.500} x2={742.500} y2={493.500} f={G} /><path d="M743.500 443v4M743.500 475v4M736 400h20M766 448v3" stroke="#000" strokeWidth="1.500" />
      <R x={771} y={406.500} x2={780.500} y2={425.500} f="#d3d3d3" /><R x={782.500} y={401.500} x2={806.500} y2={416.500} f={G} /><circle cx="794" cy="409" r="5" fill="#777" stroke="#000" shapeRendering="auto" /><path d="M790 402h8M794 402v6" stroke="#000" strokeWidth="2" />
      <Toilet t="translate(796 447) rotate(-90)" />
      <R x={773.5} y={463.500} x2={812.500} y2={491.500} f="#555" /><R x={775.5} y={466.500} x2={810} y2={486} f={G} /><R x={776} y={485} x2={809} y2={489} f="#999" s="none" /><path d="M791 474h3l-1.500 2z" fill="none" stroke="#000" />
      {/* lower bedroom */}
      <R x={575.5} y={503.500} x2={585.500} y2={516} f="#1d1d1d" /><R x={575.5} y={568} x2={585.500} y2={581} f="#1d1d1d" />
      <R x={575.5} y={517.500} x2={638.500} y2={567.500} f="#1a1414" /><R x={579} y={520} x2={610} y2={565} f="#aca697" s="none" /><R x={609.500} y={518.500} x2={634.500} y2={566.500} f="#3d0206" />
      <R x={579} y={523} x2={587.500} y2={540} f="#c9c5ba" rx="1" /><R x={579} y={544} x2={587.500} y2={561} f="#c9c5ba" rx="1" /><R x={588} y={524} x2={597} y2={540} f="#4a0b10" /><R x={588} y={546} x2={597} y2={561} f="#4a0b10" />
      <R x={574.500} y={574} x2={582.500} y2={664} f="#3c3c3c" /><path d="M575 578h7M575 589.500h8M575 602h7M575 609h8M575 616.500h8M575 625h8M575 644h8M577 657h5M580 599v18" stroke="#000" strokeWidth="1.500" />
      <g shapeRendering="auto"><path d="M587 611.500l21-18.500 33 37.500-21 18.500z" fill="#b7b7b7" stroke="#000" /><path d="M586 611l7-5 33 37-6 6z" fill="#151515" stroke="#000" /><path d="M583 629l13-5 9 20-11 5z" fill="#b5b5b5" stroke="#000" /></g>
      {/* lower closet, bath */}
      <R x={689.5} y={499.500} x2={721.500} y2={518.500} f={G} /><R x={721.5} y={499.500} x2={749.500} y2={518.500} f={G} /><R x={690.5} y={577.500} x2={722.500} y2={596.500} f={G} /><path d="M704 519.500h3M736 519.500h4M704 576.500h4M711 576.500h6" stroke="#000" strokeWidth="1.500" />
      <R x={760.5} y={500.500} x2={810.500} y2={518.500} f="#4c3834" /><R x={776.500} y={502.500} x2={794.500} y2={515.500} f="#777" /><R x={778} y={507} x2={793} y2={514} f="#e2e6e8" /><path d="M782 505h8M786 503v6" stroke="#000" strokeWidth="2" />
      <R x={755} y={547.500} x2={764.500} y2={566.500} f="#d3d3d3" /><path d="M756.500 595.500v-26h12l15 16v10z" fill={G} stroke="#000" strokeWidth="1.500" /><circle cx="770" cy="583" r="1" fill="#000" /><Toilet t="translate(800.500 577)" />
      <path d="M684 597.500h131M689 605.500h127" stroke="#000" />
      {/* terrace */}
      <R x={684.500} y={613.500} x2={691} y2={662.500} f={W} /><path d="M692 612v51" stroke="#000" strokeWidth="2" />
      <path d="M685 605v62" stroke="#000" /><R x={686} y={663} x2={692} y2={670} f="#fff" s="none" /><R x={686} y={606} x2={691} y2={613} f="#fff" s="none" />
      <path d="M691 667.500h131.500V597M824.500 596.500v73M816 596.500h9M691 669.500h134" stroke="#000" fill="none" /><path d="M823.500 597v72M691 668.500h133" stroke="#999" />
      <g shapeRendering="auto"><path d="M731 622q3-8 13-9 11 1 14 9l-2 2v8q-5 7-12 6-10 0-12-6v-8z" fill="#cdb0f0" /><path d="M731 622q3-8 13-9 11 1 14 9" fill="none" stroke="#7a3030" strokeDasharray="2 1" /><path d="M737 638v-9q7-8 14 0v9q-7 1-14 0z" fill="#ffb0b0" /><path d="M738 621h2M742 619l3 2M748 621h2" stroke="#333" />
        <path d="M776 624q6-13 18-12 15 3 15 18-2 13-15 17-6-1-10-7-7-3-8-16z" fill="#050505" /><path d="M780 624q6 4 13 14l-1 4q-9-3-12-12z" fill="#aaa" /><circle cx="797" cy="624" r="1.200" fill="#fff" /></g>
    </svg>
  );
}

function ViewCube() {
  return (
    <svg width="100" height="100" viewBox="1226 212 100 100" className="absolute top-[44px] right-[17px] opacity-99">
      <circle cx="1276.500" cy="262.500" r="39.500" fill="none" stroke="#f1f1f1" strokeWidth="11" />
      <circle cx="1276.500" cy="262.500" r="45" fill="none" stroke="#b9b9b9" strokeDasharray="5 1" /><circle cx="1276.500" cy="262.500" r="34.500" fill="none" stroke="#b9b9b9" strokeDasharray="4 1" />
      <rect x="1253" y="240" width="47" height="46" rx="4" fill="#f4f4f4" /><rect x="1255" y="242" width="43" height="42" rx="3" fill="#e2e2e2" /><rect x="1257.500" y="243.500" width="38" height="38" fill="#ececec" stroke="#999" /><rect x="1265" y="251" width="23" height="23" fill="#e2e4e7" />
      <text x="1276.500" y="266" fontSize="9" fontWeight="700" fill="#8c9096" textAnchor="middle" textLength="16" lengthAdjust="spacingAndGlyphs">TOP</text>
      <g fontSize="14" fontWeight="700" fill="#eee" stroke="#a2a2a2" strokeWidth="0.9" textAnchor="middle"><text x="1276.500" y="226">N</text><text x="1276.500" y="309">S</text><text x="1235" y="267.500">W</text><text x="1318" y="267.500">E</text></g>
    </svg>
  );
}

function NavBar() {
  return (
    <div className="absolute top-[154px] right-[1px] flex h-[118px] w-[35px] flex-col items-center rounded-[5px] border-2 border-[#c0c0c0] bg-[#f3f3f3]">
      <svg width="9" height="9" className="mt-[1px] mr-[1px] self-end"><circle cx="4.500" cy="4.500" r="3.800" fill="#ddd" stroke="#999" /><path d="M3 3l3 3M6 3L3 6" stroke="#888" /></svg>
      <svg width="24" height="24" className="mt-[8px]"><path d="M12 1h8q3 0 3 3v8A11 11 0 1112 1z" fill="#e4e8ee" stroke="#8d9299" /><circle cx="12" cy="12" r="6" fill="#f3f3f3" stroke="#8d9299" /><path d="M7 16l-3 3M16 16l3 3" stroke="#8d9299" /></svg>
      <Caret className="mt-[7px] opacity-70" />
      <div className="mt-[5px] h-px w-[26px] bg-[#bbb]" />
      <svg width="17" height="17" className="mt-[7px]"><rect x=".5" y=".5" width="11" height="11" fill="#b4d09e" stroke="#8aa878" /><circle cx="11" cy="11" r="3.500" fill="#eee" stroke="#888" /><path d="M13.500 13.500L16.500 16" stroke="#888" strokeWidth="1.500" /></svg>
      <Caret className="mt-[9px] opacity-70" />
      <svg width="9" height="9" className="mt-auto mr-[1px] mb-[2px] self-end"><circle cx="4.500" cy="4.500" r="3.800" fill="#ddd" stroke="#999" /><path d="M2 4.500h5" stroke="#888" /></svg>
    </div>
  );
}

function ViewBar() {
  const s = "w-[20.800px] shrink-0";
  return (
    <div className="flex h-[18px] w-[390px] shrink-0 items-center overflow-hidden border-l border-[#777] bg-[#f0f0f0] pb-[3px]">
      <span className="ml-[25px] w-[54px] shrink-0 pt-[2px] tracking-[-0.1px]">1 : 100</span>
      <div className={s}><Svg><path d="M.5 2.500h15v11H.5z" fill="#fff" /><path d="M0 5l3-3M0 9l7-7M0 13L11 2M4 13L15 2M8 13l8-8M12 13l4-4M4 2l11 11M0 2l11 11M8 2l8 8M0 6l7 7M12 2l4 4" strokeWidth="0.6" /></Svg></div>
      <div className={s}><Svg><path d="M1 6l4-4h10v7l-4 4H1z" fill="#8cc9ef" stroke="#2a6a9a" /><path d="M1 6h10v7M11 6l4-4" stroke="#2a6a9a" /><path d="M2 9h8" stroke="#d33" /><path d="M2 11h8" stroke="#2a2" /></Svg></div>
      <div className={s}><Svg><circle cx="7" cy="7" r="4" fill="#ffd34d" stroke="#c98a10" /><path d="M7 0v2M1 2l2 2M0 7h2M2 12l1-1M12 2l-1 1" stroke="#c98a10" /><RedX /></Svg></div>
      <div className={s}><Svg><circle cx="7" cy="6" r="4.500" fill="#eef" stroke={B} /><path d="M1 12h7l3-2" /><RedX /></Svg></div>
      <div className={s}><Svg><path d="M0 4l4 3h5l2-3-3-2H5L4 4v7h5" fill="#fff" strokeWidth="0.9" /><Bulb /></Svg></div>
      <div className={s}><Svg w={17}><path d="M0 13h3V4h13M6 13V7h9" stroke={B} strokeWidth="1.500" /><RedX x={9} y={7} /></Svg></div>
      <div className={s}><Svg><path d="M0 13h3V4h7M6 13V7h3" stroke={B} strokeWidth="1.500" /><Bulb /></Svg></div>
      <div className={s}><Svg><path d="M1 8l6-6 7 4M3 7v6l4 2M3 7l3 3v4" fill="#fff" /><path d="M8.500 9.500h6v5h-6z" fill="#9ec9a0" /><path d="M10 9V7h3v2" /></Svg></div>
      <div className="w-[26px] shrink-0"><Svg><path d="M0 6l2-3M1 7q3 8 6 1l3-1q3 6 5-1L12 3" /><circle cx="4" cy="10" r="2.500" /><circle cx="11.500" cy="8.500" r="2.500" /></Svg></div>
      <div className="w-[16px] shrink-0"><Svg w={7} h={15} vb="9 2 7 13"><Bulb /></Svg></div>
      <div className={s}><Svg><path d="M1 3h12v10H1z" strokeDasharray="3 1" strokeWidth="1.800" stroke="#222" /><circle cx="11" cy="10" r="3" fill="#fff" strokeWidth="1.500" stroke="#222" /></Svg></div>
      <div className={s}><Svg><path d="M1 14V6l3-4h7l1 2M1 7h9M4 14V7M7 14V7" stroke={D} /><path d="M1 14V8M5 14V9" stroke="#b33" /><Bulb /></Svg></div>
      <div className={s}><Svg><path d="M4 5l3-3h8v6l-3 3M1 7h8v7H1zM4 7V5h8v6H9M5 8v5" fill="#ddd" strokeWidth="1" /></Svg></div>
      <div className={s}><Svg w={17}><path d="M1 1v13M15 1v5M1 4h14M3 2L1 4l2 2M13 2l2 2-2 2" strokeWidth="1" /><path d="M1 13h7" strokeDasharray="2 1" /><path d="M9.500 9.500h7v5h-7z" fill="#999" /><path d="M11 9V7h4v2" /></Svg></div>
      <Chev d="<" className="ml-[5px]" />
    </div>
  );
}

const Box = ({ className = "", children }) => <div className={"flex h-[22px] shrink-0 items-center justify-center border border-[#cfcfcf] bg-[#dadada] " + className}>{children}</div>;

function StatusBar() {
  return (
    <div className="flex h-[24px] items-center border-t border-[#8b8b8b] bg-gradient-to-b from-[#e2e2e2] to-[#c2c2c2] text-[#111]">
      <span className="ml-[2px] w-[395px] shrink-0 tracking-[-0.04px] whitespace-nowrap">Click to select, TAB for alternates, CTRL adds, SHIFT unselects.</span>
      <Box className="w-[25px]"><Svg><path d="M1 8h4v7H1zM6 7h4v8H6zM11 6h4v9h-4zM4 3h5v4H4zM10 1.500h4v4h-4z" fill="#8f8f8f" stroke="#f4f4f4" strokeWidth="0.9" /></Svg></Box>
      <div className="mt-[3px] ml-[2px] flex h-[20px] w-[207px] items-end justify-end border border-[#ddd] bg-white"><div className="flex h-full items-end border-l border-[#eee] px-[4px]"><Chev c="#a9a9a9" /></div></div>
      <Box className="ml-[2px] w-[53px] gap-[4px]"><Svg><path d="M5 1h9v5H9l-1 3H5V6h5" fill="#fff" stroke="#999" /><path d="M1 15l4-6 4 6z" fill="#999" stroke="none" /></Svg><span>:0</span></Box>
      <Box className="ml-[2px] w-[25px]"><Svg><path d="M1 1.500h14v13H1z" fill="#fff" /><path d="M1 4h14M3 7h3M3 11h3M8 7h5M8 9.500h5M8 12h5" /></Svg></Box>
      <Box className="ml-[1px] w-[25px]"><Svg><path d="M5 1h10v14H5z" fill="#aaa" stroke="none" /><path d="M0 6.500h5V3l6 5-6 5V9.500H0z" fill="#8a8a8a" stroke="#eee" strokeWidth="0.7" /></Svg></Box>
      <div className="mt-[3px] ml-[1px] flex h-[20px] w-[156px] items-center justify-between border border-[#bbb] bg-white text-[#777]"><span className="pl-[2px] tracking-[0.1px]">Main Model</span><div className="flex h-full items-end border-l border-[#eee] px-[3px]"><Chev c="#a9a9a9" /></div></div>
      <div className="ml-[220px] flex gap-[2px]">
        <Box className="w-[24px]"><Svg><rect x=".8" y="2.500" width="6" height="4" rx="2" stroke="#d49b13" strokeWidth="1.600" /><rect x="9" y="2.500" width="6" height="4" rx="2" stroke="#d49b13" strokeWidth="1.600" /><path d="M5 4.500h6" stroke="#d49b13" strokeWidth="1.600" /><Cursor x={6} y={4.500} /></Svg></Box>
        <Box className="w-[24px]"><Svg><path d="M0 10L8 3v7zM0 12.500h9" fill="#d8ecfb" stroke={B} strokeWidth="1.500" /><path d="M9 1l6 6M15 1L9 7" stroke="#c62020" strokeWidth="2" /><Cursor x={9} y={5} /></Svg></Box>
        <Box className="w-[24px]"><Svg><path d="M1 1h9v3H9v3l2 2v1H0V9l2-2V4H1z" fill="#f2a35a" stroke="#a5541a" /><path d="M5.500 10v6" /><Cursor x={9} y={5} /></Svg></Box>
        <Box className="w-[24px]"><Svg><path d="M1 4l7-3v11l-7 3z" fill="#a8d6f5" stroke={B} /><path d="M9 1l6 6M15 1L9 7" stroke="#c62020" strokeWidth="2" /><Cursor x={8} y={5} /></Svg></Box>
        <Box className="w-[24px]"><Svg><path d="M5 0v10M0 5h10M3.500 1.500L5 0l1.500 1.500M3.500 8.500L5 10l1.500-1.500M1.500 3.500L0 5l1.500 1.500M8.500 3.500L10 5 8.500 6.500" stroke="#111" /><Cursor x={9} y={5} /></Svg></Box>
        <Box className="w-[24px]"><Svg><circle cx="8" cy="8" r="5.500" stroke="#a3a3a3" strokeWidth="3.500" strokeDasharray="3.400 .9" /></Svg></Box>
      </div>
      <Svg w={17} className="ml-[1px]"><path d="M1 2h15l-6 7v6H7V9z" fill="#c6cbd4" /></Svg>
      <span className="pt-[4px]">:0</span>
    </div>
  );
}

const Chrome = () => <Svg><circle cx="8" cy="8" r="8" fill="#4caf50" stroke="none" /><path d="M8 8L1 4a8 8 0 0114 0z" fill="#e94335" stroke="none" /><path d="M8 8l7-4a8 8 0 01-6 12z" fill="#fbc116" stroke="none" /><circle cx="8" cy="8" r="3.700" fill="#4285f4" stroke="#fff" /></Svg>;

function Taskbar() {
  const c = "flex h-full w-[46px] shrink-0 items-center justify-center";
  const open = "flex h-[29px] w-[42px] mx-[2px] shrink-0 items-center justify-center border border-[#b9a695] bg-[#b9a08a]/50";
  return (
    <div className="relative flex h-[30px] items-center overflow-hidden bg-[#65564b] text-white">
      <svg className="absolute inset-0" width="1366" height="30">
        <defs><filter id="bokeh" x="0" y="0" width="1" height="1" colorInterpolationFilters="sRGB"><feTurbulence type="fractalNoise" baseFrequency="0.035 0.012" numOctaves="3" seed="11" /><feColorMatrix values="0 0 0 0 .3  0 0 0 0 .27  0 0 0 0 .25  2.2 0 0 0 -.7" /></filter>
          <filter id="soft"><feGaussianBlur stdDeviation="6" /></filter></defs>
        <g filter="url(#soft)" fill="#a98458"><circle cx="725" cy="22" r="13" /><circle cx="765" cy="14" r="15" /><circle cx="810" cy="16" r="16" /><circle cx="120" cy="15" r="10" /><circle cx="1280" cy="24" r="20" /><circle cx="1350" cy="6" r="12" /><circle cx="895" cy="18" r="6" /></g>
        <rect width="1366" height="30" filter="url(#bokeh)" opacity=".75" />
      </svg>
      <div className="relative flex h-full w-full items-center">
        <div className="flex w-[39px] shrink-0 justify-center"><svg width="14" height="14"><path d="M0 2l6-1v5.500H0zM7 .9L14 0v6.500H7zM0 7.500h6V13l-6-1zM7 7.500h7V14l-7-.9z" fill="#fff" /></svg></div>
        <div className={c}><Svg><path d="M0 3h16v13H0z" fill="#12962c" stroke="none" /><path d="M5 3V1h6v2" stroke="#12962c" strokeWidth="1.600" /><path d="M3 6l4-.6V9H3zM8 5.200l5-.7V9H8zM3 10h4v3.500L3 13zM8 10h5v4.500l-5-.7z" fill="#fff" stroke="none" /></Svg></div>
        <div className={c + " pl-[2px]"}><Svg><path d="M3 8.500h11a5.500 5.500 0 10-1 3.500" stroke="#47b1ee" strokeWidth="2.800" /><path d="M1 14C0 8 9 0 15 2" stroke="#f2c230" strokeWidth="1.600" /></Svg></div>
        <div className={c + " pl-[1px]"}><Svg><path d="M0 0h16v16H0z" fill="#eadcdc" stroke="none" /><path d="M2 14L7 2h3l4 12h-3l-1-3H6l-1 3zM7 8h2L8 5z" fill="#b3202a" stroke="none" /></Svg></div>
        <div className={c + " pl-[1px]"}><Svg><circle cx="8" cy="8" r="8" fill="#6cbb3c" stroke="none" /><path d="M4.500 3v5c0 4 6 4 6 0V3M10.500 8c0 3 2 3 3 2" stroke="#fff" strokeWidth="2" /></Svg></div>
        <div className={c + " pl-[1px]"}><Svg><circle cx="8" cy="8" r="8" fill="#25b34a" stroke="none" /><path d="M3.500 5.500h9M6 5.500V12M10 5.500V11q0 1 1.500 1" stroke="#fff" strokeWidth="1.600" /></Svg></div>
        <div className={open}><Svg><path d="M0 2h6l1 2h8v10H0z" fill="#f2d675" stroke="none" /><path d="M1 6h14v5H1z" fill="#fbeeb0" stroke="none" /><path d="M2 15V9h12v6h-3v-3H5v3z" fill="#6cb8e8" stroke="none" /></Svg></div>
        <div className={c + " pl-[2px]"}><Chrome /></div>
        <div className={c + " pl-[2px]"}><Svg><path d="M0 0h11l3 3v13H0z" fill="#f4f4f4" stroke="none" /><path d="M6.500 6.500q0-2.500 3-2.500t3 2.500-1.500 2.500H8q-2 0-2 2.500" stroke="#3a76a8" strokeWidth="2.200" /><path d="M14 7.500q1.500 3-1 4h-3.500v2q2 1.500 4.500 0" stroke="#f2c93c" strokeWidth="2.200" /></Svg></div>
        <div className={c + " pl-[2px]"}><span className="relative flex h-[16px] w-[16px] justify-center border border-[#2bc48a] bg-[#111] text-[8px] leading-[9px] font-bold">PC<span className="absolute bottom-[2px] left-[2px] h-px w-[6px] bg-white" /></span></div>
        <div className="mr-[2px] ml-[3px] flex h-[29px] w-[42px] shrink-0"><div className="flex w-[36px] items-center justify-center border border-[#b9a695] bg-[#b9a08a]/50"><Chrome /></div><div className="w-[3px] border-y border-r border-[#b9a695] bg-[#8a7666]" /><div className="w-[3px] border-y border-r border-[#b9a695] bg-[#8a7666]" /></div>
        <div className={open}><Svg><circle cx="8" cy="8" r="7.200" fill="#fff" stroke="#a06be0" strokeWidth="1.500" /><path d="M6 11V5l5-1v6" stroke="#e0458c" strokeWidth="1.400" /><circle cx="5" cy="11" r="1.300" fill="#5a7be8" stroke="none" /><circle cx="10" cy="10" r="1.300" fill="#e0458c" stroke="none" /></Svg></div>
        <div className={open}><Svg><path d="M1 9q0-6 7-6 6 0 5 4-1 1-3 1t-1 3-4 2q-4 0-4-4z" fill="#cfe4f4" stroke="#78a8cc" /><circle cx="4" cy="8" r="1.200" fill="#e33" stroke="none" /><circle cx="7" cy="5.500" r="1.200" fill="#3a3" stroke="none" /><circle cx="10.500" cy="5.500" r="1.200" fill="#fb3" stroke="none" /><path d="M14 1v13" stroke="#e08a2a" strokeWidth="2" /></Svg></div>
        <div className="mx-[2px] flex h-[29px] w-[42px] shrink-0 items-center justify-center border border-white bg-[#b5aca6]"><Svg><path d="M0 0h16v16H0z" fill="#cfe0f2" stroke="none" /><path d="M3 14V2h5q5 0 5 3.500Q13 8 10 9l4 5h-3.500L7 9.500H6V14zM6 4.500V7h2q2 0 2-1.200T8 4.500z" fill="#1e5c9e" stroke="none" /></Svg></div>
        <svg width="8" height="5" className="ml-[512px] shrink-0"><path d="M0 5l4-5 4 5z" fill="#fff" /></svg>
        <Svg w={15} className="ml-[14px]"><path d="M7 3h7v12H7zM9 1.500h3" stroke="#fff" strokeWidth="1.600" /><path d="M1 1v4M4 1v4M0 5h5v3H0zM2.500 8v7" stroke="#fff" /></Svg>
        <Svg className="ml-[9px]"><path d="M1 1v15" stroke="#fff" strokeWidth="1.500" /><path d="M2 2h5l2 1h5v7H8L7 9H2z" fill="#fff" stroke="none" /><circle cx="11" cy="11" r="4.500" fill="#d42a2a" stroke="none" /><path d="M9 9l4 4M13 9l-4 4" stroke="#fff" strokeWidth="1.500" /></Svg>
        <Svg w={17} className="ml-[8px]"><path d="M1 12h2v3H1zM5 9h2v6H5zM9 5h2v10H9zM13 2h2v12h-2z" stroke="#ddd" fill="#777" strokeWidth="0.8" /><circle cx="11" cy="11" r="4.500" fill="#d42a2a" stroke="none" /><path d="M9 9l4 4M13 9l-4 4" stroke="#fff" strokeWidth="1.500" /></Svg>
        <span className="ml-[12px] w-[56px] shrink-0 tracking-[-0.1px]">ENG</span><span className="tracking-[-0.5px]">14:09</span>
      </div>
    </div>
  );
}

export default function App() {
  return (
    <div className="flex h-[768px] w-[1366px] flex-col overflow-hidden bg-[#f0f0f0] font-['Open_Sans','Noto_Sans',sans-serif] text-[11.500px] leading-[16px] text-[#111]">
      <Header />
      <Ribbon />
      <div className="h-[28px] shrink-0 bg-[#e1e2e3]" />
      <div className="flex h-[547px]">
        <div className="flex min-w-0 flex-1 flex-col">
          <div className="flex h-[529px]">
            <div className="flex w-[228px] shrink-0 flex-col border-t border-r-2 border-b-2 border-t-[#999] border-r-[#6d6d6d] border-b-[#8a8a8a] pt-[3px]">
              <Properties />
              <Browser />
            </div>
            <div className="relative flex-1 overflow-hidden border-t border-[#6d6d6d] bg-white">
              <Plan />
              <ViewCube />
              <NavBar />
              <div className="absolute top-[8px] right-[4px] flex items-center gap-[6px]">
                <svg width="13" height="12"><rect x=".5" y="5.500" width="11" height="3" fill="#fff" stroke="#444" /></svg>
                <Svg w={12} h={12}><path d="M3 3V1h8v8H9M1 3h8v8H1zM4 5.500h2.500v3H4z" fill="#fff" /></Svg>
                <Svg w={12} h={12}><path d="M1 1h3l2 2.500L8 1h3L7.800 6 11 11H8L6 8.500 4 11H1l3.200-5z" fill="#fff" strokeWidth="1.300" /></Svg>
              </div>
            </div>
          </div>
          <div className="flex h-[18px] items-center">
            <ViewBar />
            <div className="mb-[2px] ml-[459px] h-[15px] w-[17px] bg-[#cdcdcd]" />
            <Chev d=">" className="mr-[4px] mb-[3px] ml-auto" />
          </div>
        </div>
        <div className="flex w-[15px] flex-col items-center border-t border-[#6d6d6d] bg-[#f0f0f0] pt-[6px]">
          <Chev d="^" /><div className="mt-[240px] h-[17px] w-[15px] bg-[#cdcdcd]" />
          <Chev className="mt-auto mb-[10px]" />
          <svg width="8" height="8" className="mb-[4px] -mr-[7px]"><path d="M6 0h2v2H6zM3 3h2v2H3zM6 3h2v2H6zM0 6h2v2H0zM3 6h2v2H3zM6 6h2v2H6z" fill="#bbb" /></svg>
        </div>
        <div className="w-[8px] border-r-4 border-[#a0a0a0] bg-[#f0f0f0]" />
      </div>
      <StatusBar />
      <Taskbar />
    </div>
  );
}
